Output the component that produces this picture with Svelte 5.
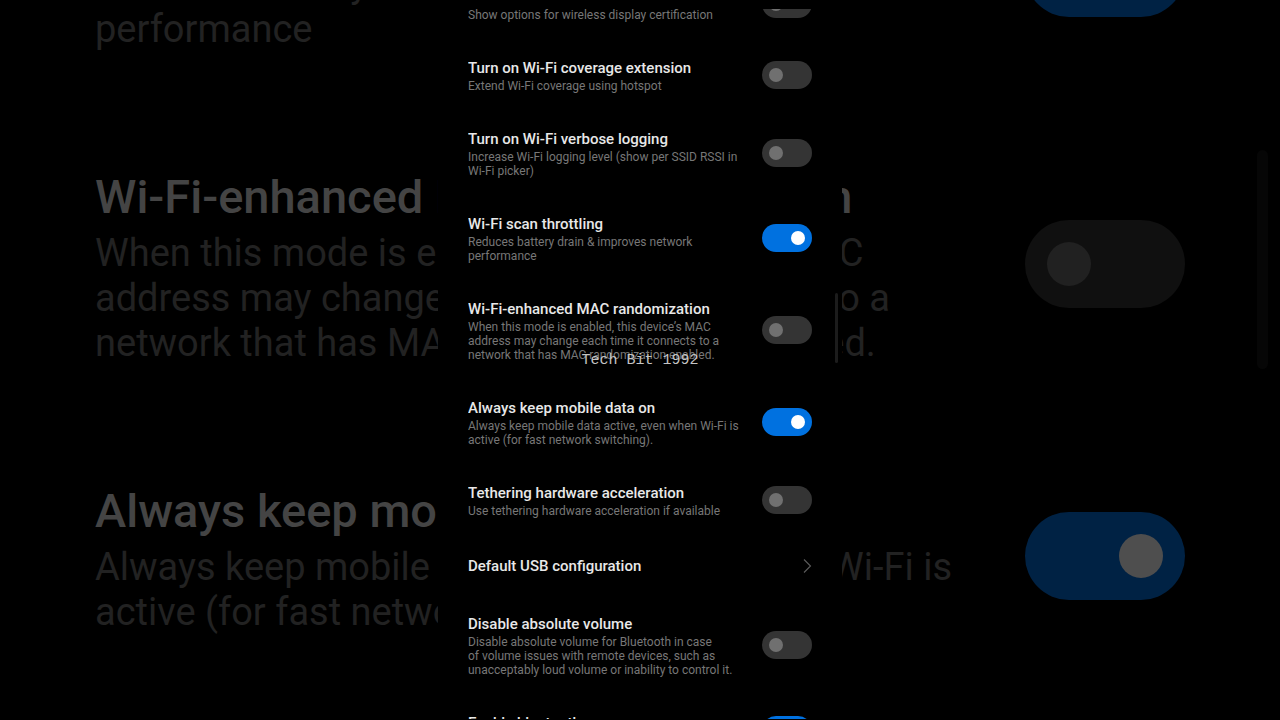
<script>
	let settings = $state([
		{ id: 'display', title: 'Wireless display certification', desc: 'Show options for wireless display certification', on: false },
		{ id: 'coverage', title: 'Turn on Wi-Fi coverage extension', desc: 'Extend Wi-Fi coverage using hotspot', on: false },
		{ id: 'verbose', title: 'Turn on Wi-Fi verbose logging', desc: 'Increase Wi-Fi logging level (show per SSID RSSI in\nWi-Fi picker)', on: false },
		{ id: 'throttling', title: 'Wi-Fi scan throttling', desc: 'Reduces battery drain & improves network\nperformance', on: true },
		{ id: 'mac', title: 'Wi-Fi-enhanced MAC randomization', desc: 'When this mode is enabled, this device’s MAC\naddress may change each time it connects to a\nnetwork that has MAC randomization enabled.', on: false },
		{ id: 'mobile', title: 'Always keep mobile data on', desc: 'Always keep mobile data active, even when Wi-Fi is\nactive (for fast network switching).', on: true },
		{ id: 'tethering', title: 'Tethering hardware acceleration', desc: 'Use tethering hardware acceleration if available', on: false },
		{ id: 'usb', title: 'Default USB configuration', link: true },
		{ id: 'volume', title: 'Disable absolute volume', desc: 'Disable absolute volume for Bluetooth in case\nof volume issues with remote devices, such as\nunacceptably loud volume or inability to control it.', on: false },
		{ id: 'bluetooth', title: 'Enable bluetooth', desc: 'Enables the Bluetooth feature stack.', on: true },
	])

	// the dimmed copy behind the phone only has room for these
	let enlarged = $derived(settings.slice(3, 6))
</script>

{#snippet row(item)}
	{#if item.link}
		<button class="row link" type="button">
			<span class="title">{item.title}</span>
			<svg class="chevron" viewBox="0 0 10 16" aria-hidden="true">
				<path d="M2 1.5 L8.5 8 L2 14.5" />
			</svg>
		</button>
	{:else}
		<label class="row">
			<span class="text">
				<span class="title">{item.title}</span>
				<span class="desc">{item.desc}</span>
			</span>
			<input class="toggle" type="checkbox" role="switch" bind:checked={item.on} />
		</label>
	{/if}
{/snippet}

<main class="stage">
	<div class="backdrop" inert>
		<div class="list">
			{#each enlarged as item (item.id)}
				{@render row(item)}
			{/each}
		</div>
		<div class="scrollbar"></div>
	</div>

	<section class="phone">
		<div class="screen">
			<div class="list">
				{#each settings as item (item.id)}
					{@render row(item)}
				{/each}
			</div>
		</div>
		<div class="scrollbar"></div>
		<p class="watermark">Tech Bit 1992</p>
	</section>
</main>

<style>
	:global(body) {
		background: #000;
	}
	.stage {
		display: grid;
		grid-template-rows: 100vh;
		grid-template-columns: 100%;
		justify-items: center;
		overflow: hidden;
		font-family: Roboto, "Noto Sans", sans-serif;
		background: #000;
	}
	.backdrop, .phone {
		grid-area: 1 / 1;
		position: relative;
		box-sizing: border-box;
		width: 100%;
		overflow: hidden;
	}
	.backdrop {
		--title-size: 47px;
		--title-line: 69px;
		--desc-size: 38px;
		--desc-line: 45px;
		--pad-top: 55px;
		--pad-bottom: 55px;
		--toggle-w: 160px;
		--toggle-h: 88px;
		--knob: 44px;
		--knob-gap: 22px;
		--title-color: #444;
		--desc-color: #222;
		--off: #101010;
		--off-knob: #212121;
		--on: #002244;
		--on-knob: #4e4e4e;
		padding: 0 95px;
	}
	.backdrop .list {
		margin-top: -162px;
	}
	.phone {
		--title-size: 15px;
		--title-line: 22px;
		--desc-size: 12px;
		--desc-line: 14px;
		--pad-top: 17px;
		--pad-bottom: 18px;
		--toggle-w: 50px;
		--toggle-h: 28px;
		--knob: 14px;
		--knob-gap: 7px;
		--title-color: #e8e8e8;
		--desc-color: #777;
		--off: #343434;
		--off-knob: #707070;
		--on: #0071e0;
		--on-knob: #fff;
		max-width: 404px;
		padding: 9px 30px 1px;
		background: #000;
	}
	.screen {
		height: 100%;
		overflow: hidden;
	}
	.screen .list {
		margin-top: -40px;
	}
	.list {
		display: flex;
		flex-direction: column;
	}
	.row {
		display: flex;
		align-items: center;
		justify-content: space-between;
		padding: var(--pad-top) 0 var(--pad-bottom);
		position: relative;
	}
	.link {
		width: 100%;
		min-height: 60px;
		border: 0;
		background: none;
		font-family: inherit;
		text-align: left;
	}
	.text {
		display: flex;
		flex-direction: column;
	}
	.title {
		font-size: var(--title-size);
		line-height: var(--title-line);
		font-weight: 500;
		color: var(--title-color);
		white-space: nowrap;
	}
	.desc {
		font-size: var(--desc-size);
		line-height: var(--desc-line);
		color: var(--desc-color);
		white-space: pre;
	}
	.toggle {
		appearance: none;
		display: flex;
		align-items: center;
		flex: none;
		box-sizing: border-box;
		width: var(--toggle-w);
		height: var(--toggle-h);
		margin: 0;
		padding: 0 var(--knob-gap);
		border-radius: var(--toggle-h);
		background: var(--off);
	}
	.toggle::before {
		content: "";
		width: var(--knob);
		height: var(--knob);
		border-radius: 50%;
		background: var(--off-knob);
	}
	.toggle:checked {
		justify-content: flex-end;
		background: var(--on);
	}
	.toggle:checked::before {
		background: var(--on-knob);
	}
	.chevron {
		width: 10px;
		height: 16px;
		fill: none;
		stroke: #5c5c5c;
		stroke-width: 1.1;
	}
	.scrollbar {
		position: absolute;
		border-radius: 6px;
	}
	.backdrop .scrollbar {
		top: 150px;
		right: 12px;
		width: 11px;
		height: 219px;
		background: #060606;
	}
	.phone .scrollbar {
		top: 293px;
		right: 4px;
		width: 3px;
		height: 70px;
		background: #1c1c1c;
	}
	.watermark {
		position: absolute;
		inset: 50% 0 auto;
		margin: -8px 0 0;
		font-family: "Liberation Mono", "Courier New", monospace;
		font-size: 15px;
		line-height: 18px;
		text-align: center;
		color: #c4c4c4;
	}
</style>
